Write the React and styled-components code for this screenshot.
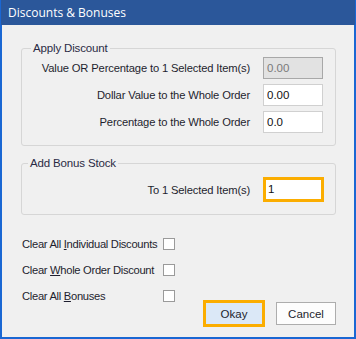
import React from "react";
import styled, { createGlobalStyle } from "styled-components";

const Global = createGlobalStyle`
  html, body { margin: 0; padding: 0; background: #f0f0f0; }
  * { box-sizing: border-box; }
`;

const Window = styled.div`
  width: 356px;
  height: 339px;
  display: flex;
  flex-direction: column;
  background: #1a67d3;
  padding: 0 2px 2px 2px;
`;

const TitleBar = styled.div`
  height: 25px;
  margin: 0 -1px;
  background: #2b579a;
  color: #ffffff;
  font-family: "Open Sans", "Noto Sans", sans-serif;
  font-size: 12px;
  display: flex;
  align-items: center;
  padding-left: 7px;
  flex-shrink: 0;
`;

const Body = styled.div`
  flex: 1;
  background: #f0f0f0;
  padding: 16px 18px 8px 19px;
  display: flex;
  flex-direction: column;
  font-family: "Liberation Sans", Arial, sans-serif;
  font-size: 11.2px;
  letter-spacing: -0.15px;
  color: #1e1e2e;
`;

const Group = styled.fieldset`
  margin: 0 0 ${(p) => p.$mb || 0}px 0;
  border: 1px solid #d6d6d6;
  border-radius: 3px;
  padding: ${(p) => p.$pt}px 12px ${(p) => p.$pb}px 8px;
  display: grid;
  grid-template-columns: 1fr auto;
  column-gap: 13px;
  row-gap: ${(p) => p.$gap || 0}px;
  align-items: center;
`;

const Legend = styled.legend`
  padding: 0 2px;
  margin-left: ${(p) => p.$ml || 0}px;
  font-size: 11.5px;
  line-height: 14px;
  color: #2a2a44;
`;

const Label = styled.label`
  text-align: right;
  white-space: nowrap;
`;

const Input = styled.input`
  width: 60px;
  height: 22px;
  border: 1px solid ${(p) => (p.disabled ? "#a8a8a8" : "#d0d0d0")};
  background: ${(p) => (p.disabled ? "#e2e2e2" : "#ffffff")};
  font-family: "Liberation Sans", Arial, sans-serif;
  font-size: 11.5px;
  color: ${(p) => (p.disabled ? "#7a7a7a" : "#111")};
  padding: 0 0 1px 3px;
  margin: 0;
  outline: none;
  -webkit-text-fill-color: ${(p) => (p.disabled ? "#7a7a7a" : "#111")};
  opacity: 1;
`;

const FocusInput = styled(Input)`
  width: 61px;
  height: 25px;
  border: 3px solid #fbad00;
  padding-left: 2px;
  margin-right: -1px;
`;

const Bottom = styled.div`
  margin-top: 16px;
  flex: 1;
  display: flex;
  justify-content: space-between;
  align-items: flex-end;
`;

const Checks = styled.div`
  align-self: flex-start;
  display: flex;
  flex-direction: column;
  width: 153px;
  margin-left: 1px;
  letter-spacing: -0.3px;
`;

const CheckRow = styled.label`
  height: 26px;
  display: flex;
  align-items: center;
  justify-content: space-between;
  white-space: nowrap;
`;

const Box = styled.span`
  width: 12px;
  height: 12px;
  flex-shrink: 0;
  border: 1px solid #9a9a9a;
  background: #ffffff;
  display: inline-block;
`;

const U = styled.span`
  text-decoration: underline;
`;

const Buttons = styled.div`
  display: flex;
  align-items: center;
  gap: 11px;
  margin-bottom: 2px;
`;

const Button = styled.button`
  width: ${(p) => (p.$primary ? 62 : 60)}px;
  height: ${(p) => (p.$primary ? 27 : 23)}px;
  border: ${(p) => (p.$primary ? "3px solid #fbad00" : "1px solid #adadad")};
  background: ${(p) => (p.$primary ? "#dbe8f7" : "#fdfdfd")};
  font-family: "Liberation Sans", Arial, sans-serif;
  font-size: 11.5px;
  color: #1e1e2e;
  padding: 0;
  margin: 0;
`;

export default function App() {
  return (
    <>
      <Global />
      <Window>
        <TitleBar>Discounts &amp; Bonuses</TitleBar>
        <Body>
          <Group $pt={2} $pb={12} $gap={5} $mb={10}>
            <Legend $ml={1}>Apply Discount</Legend>
            <Label>Value OR Percentage to 1 Selected Item(s)</Label>
            <Input disabled defaultValue="0.00" />
            <Label>Dollar Value to the Whole Order</Label>
            <Input defaultValue="0.00" />
            <Label>Percentage to the Whole Order</Label>
            <Input defaultValue="0.0" />
          </Group>
          <Group $pt={7} $pb={12}>
            <Legend $ml={-2}>Add Bonus Stock</Legend>
            <Label>To 1 Selected Item(s)</Label>
            <FocusInput defaultValue="1" />
          </Group>
          <Bottom>
            <Checks>
              <CheckRow>
                <span>
                  Clear All <U>I</U>ndividual Discounts
                </span>
                <Box />
              </CheckRow>
              <CheckRow>
                <span>
                  Clear <U>W</U>hole Order Discount
                </span>
                <Box />
              </CheckRow>
              <CheckRow>
                <span>
                  Clear All <U>B</U>onuses
                </span>
                <Box />
              </CheckRow>
            </Checks>
            <Buttons>
              <Button $primary>Okay</Button>
              <Button>Cancel</Button>
            </Buttons>
          </Bottom>
        </Body>
      </Window>
    </>
  );
}
